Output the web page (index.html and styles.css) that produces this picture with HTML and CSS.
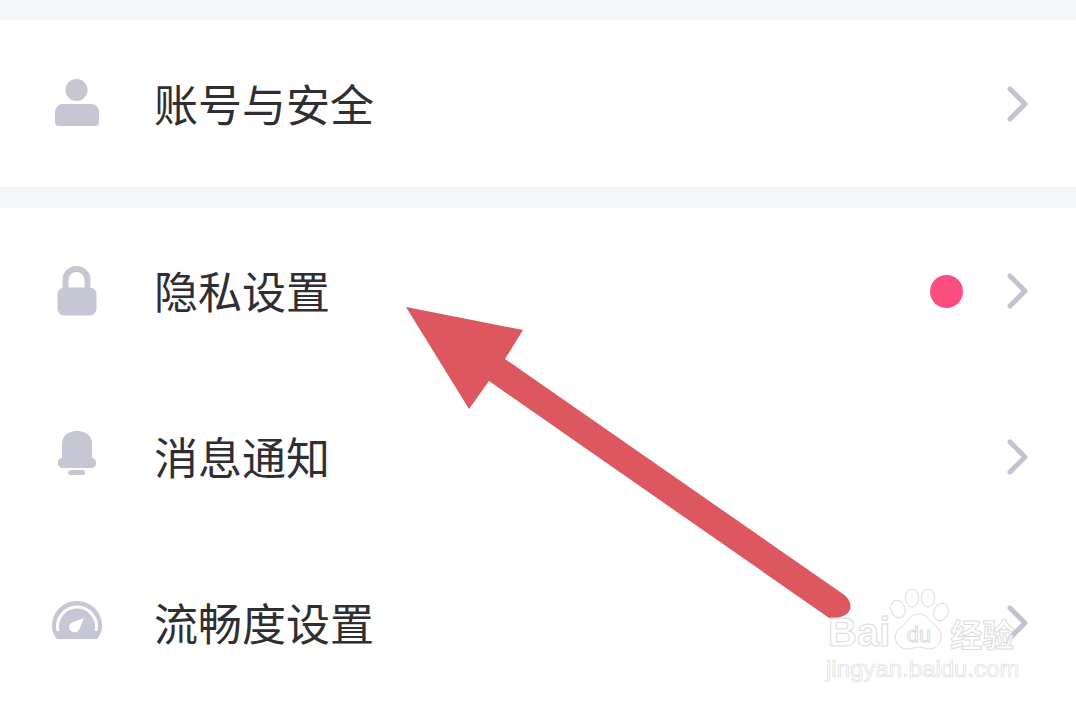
FILE: index.html
```html
<!DOCTYPE html>
<html lang="zh-CN">
<head>
    <meta charset="UTF-8">
    <title>设置</title>
    <link rel="stylesheet" href="styles.css">
</head>
<body>
    <div class="band band-top"></div>

    <div class="group">
        <div class="row row-first">
            <svg class="icon" viewBox="0 0 50 50">
                <circle cx="24.5" cy="11" r="11"/>
                <path d="M10 25h29a8 8 0 0 1 8 8v10a4 4 0 0 1-4 4H7a4 4 0 0 1-4-4V33a8 8 0 0 1 7-8z"/>
            </svg>
            <span class="label">账号与安全</span>
            <svg class="chevron" viewBox="0 0 22 36"><path d="M3 3l15 15L3 33"/></svg>
        </div>
    </div>

    <div class="band"></div>

    <div class="group">
        <div class="row">
            <svg class="icon" viewBox="0 0 50 50">
                <path class="shackle" d="M13.500 26V14a11 11 0 0 1 22 0v12"/>
                <rect x="5.500" y="21.500" width="39" height="28" rx="7"/>
            </svg>
            <span class="label">隐私设置</span>
            <span class="dot"></span>
            <svg class="chevron" viewBox="0 0 22 36"><path d="M3 3l15 15L3 33"/></svg>
        </div>
        <div class="row">
            <svg class="icon" viewBox="0 0 50 50">
                <path d="M10 28V12C10 4 16-1 25-1S40 4 40 12v16z"/>
                <rect x="6" y="26" width="38" height="10" rx="4.500"/>
                <rect x="16" y="38" width="17" height="5" rx="2.500"/>
            </svg>
            <span class="label">消息通知</span>
            <svg class="chevron" viewBox="0 0 22 36"><path d="M3 3l15 15L3 33"/></svg>
        </div>
        <div class="row">
            <svg class="icon" viewBox="0 0 50 50">
                <path d="M5 41C1 36 0 32 0 28 0 14 11 3 25 3s25 11 25 25c0 4-1 8-5 13z"/>
                <path class="gauge-arc" d="M6 33a19.500 19.500 0 1 1 38 0"/>
                <path class="gauge-needle" d="M32 20L27 32a5.500 5.500 0 0 1-10-3 5 5 0 0 1 2-4z"/>
            </svg>
            <span class="label">流畅度设置</span>
            <svg class="chevron" viewBox="0 0 22 36"><path d="M3 3l15 15L3 33"/></svg>
        </div>
    </div>

    <!-- Pfeil -->
    <svg class="arrow" viewBox="0 0 1076 704">
        <path d="M406 307L523 330L505 359L843 594C853 601 853 612 843 616L832 620L489 381L469 409z"/>
    </svg>

    <!-- Wasserzeichen -->
    <div class="watermark">
        <div class="wm-top">
            <span class="wm-text">Bai</span>
            <svg class="paw" viewBox="0 0 66 66">
                <ellipse cx="12" cy="20" rx="7" ry="9" transform="rotate(-20 12 20)"/>
                <ellipse cx="26" cy="9" rx="6.500" ry="9"/>
                <ellipse cx="42" cy="9" rx="6.500" ry="9"/>
                <ellipse cx="55" cy="23" rx="7" ry="9" transform="rotate(25 55 23)"/>
                <path d="M33 25c8 0 11 8 18 13 8 7 4 22-8 22-4 0-6-2-10-2s-7 2-12 2C10 60 5 46 14 39c8-5 10-14 19-14z"/>
                <text x="33" y="53">du</text>
            </svg>
            <span class="wm-text wm-cn">经验</span>
        </div>
        <div class="wm-url">jingyan.baidu.com</div>
    </div>
</body>
</html>
```

FILE: styles.css
```css
/* Global Styles */
body, html {
    margin: 0;
    padding: 0;
    height: 704px;
    overflow: hidden;
    background-color: #ffffff;
    font-family: "Noto Sans CJK SC", "Noto Sans", sans-serif;
    color: #2f2f33;
}

body {
    position: relative;
}

.band {
    height: 21px;
    background: #f5f6fa;
}

.band-top {
    height: 20px;
}

/* Rows */
.row {
    display: flex;
    align-items: center;
    height: 166px;
    padding: 0 47px 0 52px;
}

.row-first {
    height: 167px;
}

.icon {
    width: 50px;
    height: 50px;
    margin-right: 53px;
    fill: #c6c6d4;
    overflow: visible;
}

.shackle {
    fill: none;
    stroke: #c6c6d4;
    stroke-width: 6;
}

.gauge-arc {
    fill: none;
    stroke: #ffffff;
    stroke-width: 3;
}

.gauge-needle {
    fill: #ffffff;
}

.label {
    flex: 1;
    padding-bottom: 2px;
    margin-left: -1px;
    font-size: 44px;
    line-height: 1;
}

.dot {
    width: 33px;
    height: 33px;
    margin-right: 44px;
    border-radius: 50%;
    background: #fb4d80;
}

.chevron {
    width: 22px;
    height: 36px;
    fill: none;
    stroke: #c2c2d3;
    stroke-width: 5;
    stroke-linecap: round;
    stroke-linejoin: round;
}

/* Overlay */
.arrow {
    position: absolute;
    left: 0;
    top: 0;
    width: 1076px;
    height: 704px;
    fill: #dd5760;
}

.watermark {
    position: absolute;
    left: 828px;
    top: 588px;
    width: 194px;
}

.wm-top {
    display: flex;
    align-items: flex-end;
    height: 64px;
}

.wm-text {
    font-family: "Liberation Sans", sans-serif;
    font-weight: bold;
    font-size: 40px;
    line-height: 40px;
    color: rgba(255, 255, 255, 0.8);
    -webkit-text-stroke: 1px #dcdcdc;
}

.wm-cn {
    font-family: "Noto Sans CJK SC", sans-serif;
    font-size: 32px;
    line-height: 38px;
}

.paw {
    width: 66px;
    height: 66px;
    margin: 0 -2px -3px -4px;
    fill: rgba(255, 255, 255, 0.8);
    stroke: #dcdcdc;
    stroke-width: 1;
}

.paw text {
    font-family: "Liberation Sans", sans-serif;
    font-size: 22px;
    text-anchor: middle;
}

.wm-url {
    margin-top: 3px;
    margin-left: -2px;
    font-family: "Liberation Sans", sans-serif;
    font-size: 24px;
    line-height: 28px;
    white-space: nowrap;
    color: rgba(255, 255, 255, 0.8);
    -webkit-text-stroke: 0.7px #dcdcdc;
}
```
